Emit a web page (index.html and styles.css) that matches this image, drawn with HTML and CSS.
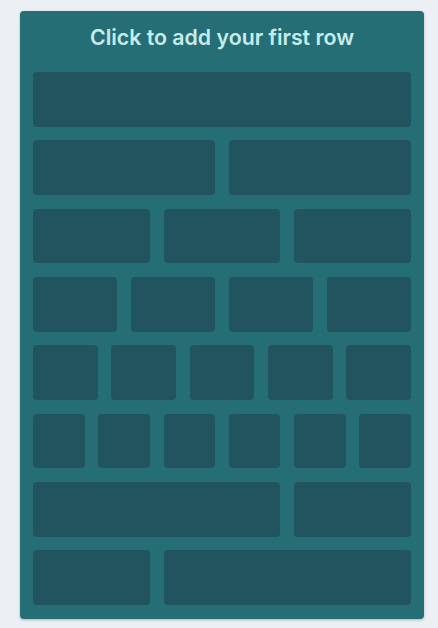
FILE: index.html
```html
<!DOCTYPE html>
<html>
<head>
<meta charset="utf-8">
<link rel="stylesheet" href="styles.css">
</head>
<body>
<div class="card">
  <div class="title">Click to add your first row</div>
  <div class="grid">
    <div class="row c1"><div class="cell"></div></div>
    <div class="row c2"><div class="cell"></div><div class="cell"></div></div>
    <div class="row c3"><div class="cell"></div><div class="cell"></div><div class="cell"></div></div>
    <div class="row c4"><div class="cell"></div><div class="cell"></div><div class="cell"></div><div class="cell"></div></div>
    <div class="row c5"><div class="cell"></div><div class="cell"></div><div class="cell"></div><div class="cell"></div><div class="cell"></div></div>
    <div class="row c6"><div class="cell"></div><div class="cell"></div><div class="cell"></div><div class="cell"></div><div class="cell"></div><div class="cell"></div></div>
    <div class="row c21"><div class="cell"></div><div class="cell"></div></div>
    <div class="row c12"><div class="cell"></div><div class="cell"></div></div>
  </div>
</div>
</body>
</html>
```
FILE: styles.css
```css
html, body {
  margin: 0;
  padding: 0;
  background: #ecf0f4;
}
body {
  padding: 11px 14px 10px 20px;
  font-family: Inter, "Noto Sans", sans-serif;
}
.card {
  width: 404px;
  box-sizing: border-box;
  background: #256e76;
  border-radius: 4px;
  padding: 13px 13px 14px 13px;
  box-shadow: 0 1px 3px rgba(0,0,0,0.25);
}
.title {
  text-align: center;
  color: #c5ecea;
  font-size: 21.3px;
  font-weight: 600;
  line-height: 26px;
  height: 34px;
  margin-bottom: 14px;
}
.grid {
  display: flex;
  flex-direction: column;
  gap: 13.66px;
}
.row {
  display: grid;
  gap: 13.66px;
  height: 54.66px;
}
.cell {
  background: #22545f;
  border-radius: 4px;
}
.c1 { grid-template-columns: 1fr; }
.c2 { grid-template-columns: repeat(2, 1fr); }
.c3 { grid-template-columns: repeat(3, 1fr); }
.c4 { grid-template-columns: repeat(4, 1fr); }
.c5 { grid-template-columns: repeat(5, 1fr); }
.c6 { grid-template-columns: repeat(6, 1fr); }
.c21 { grid-template-columns: repeat(3, 1fr); }
.c21 .cell:first-child { grid-column: span 2; }
.c12 { grid-template-columns: repeat(3, 1fr); }
.c12 .cell:last-child { grid-column: span 2; }
```
